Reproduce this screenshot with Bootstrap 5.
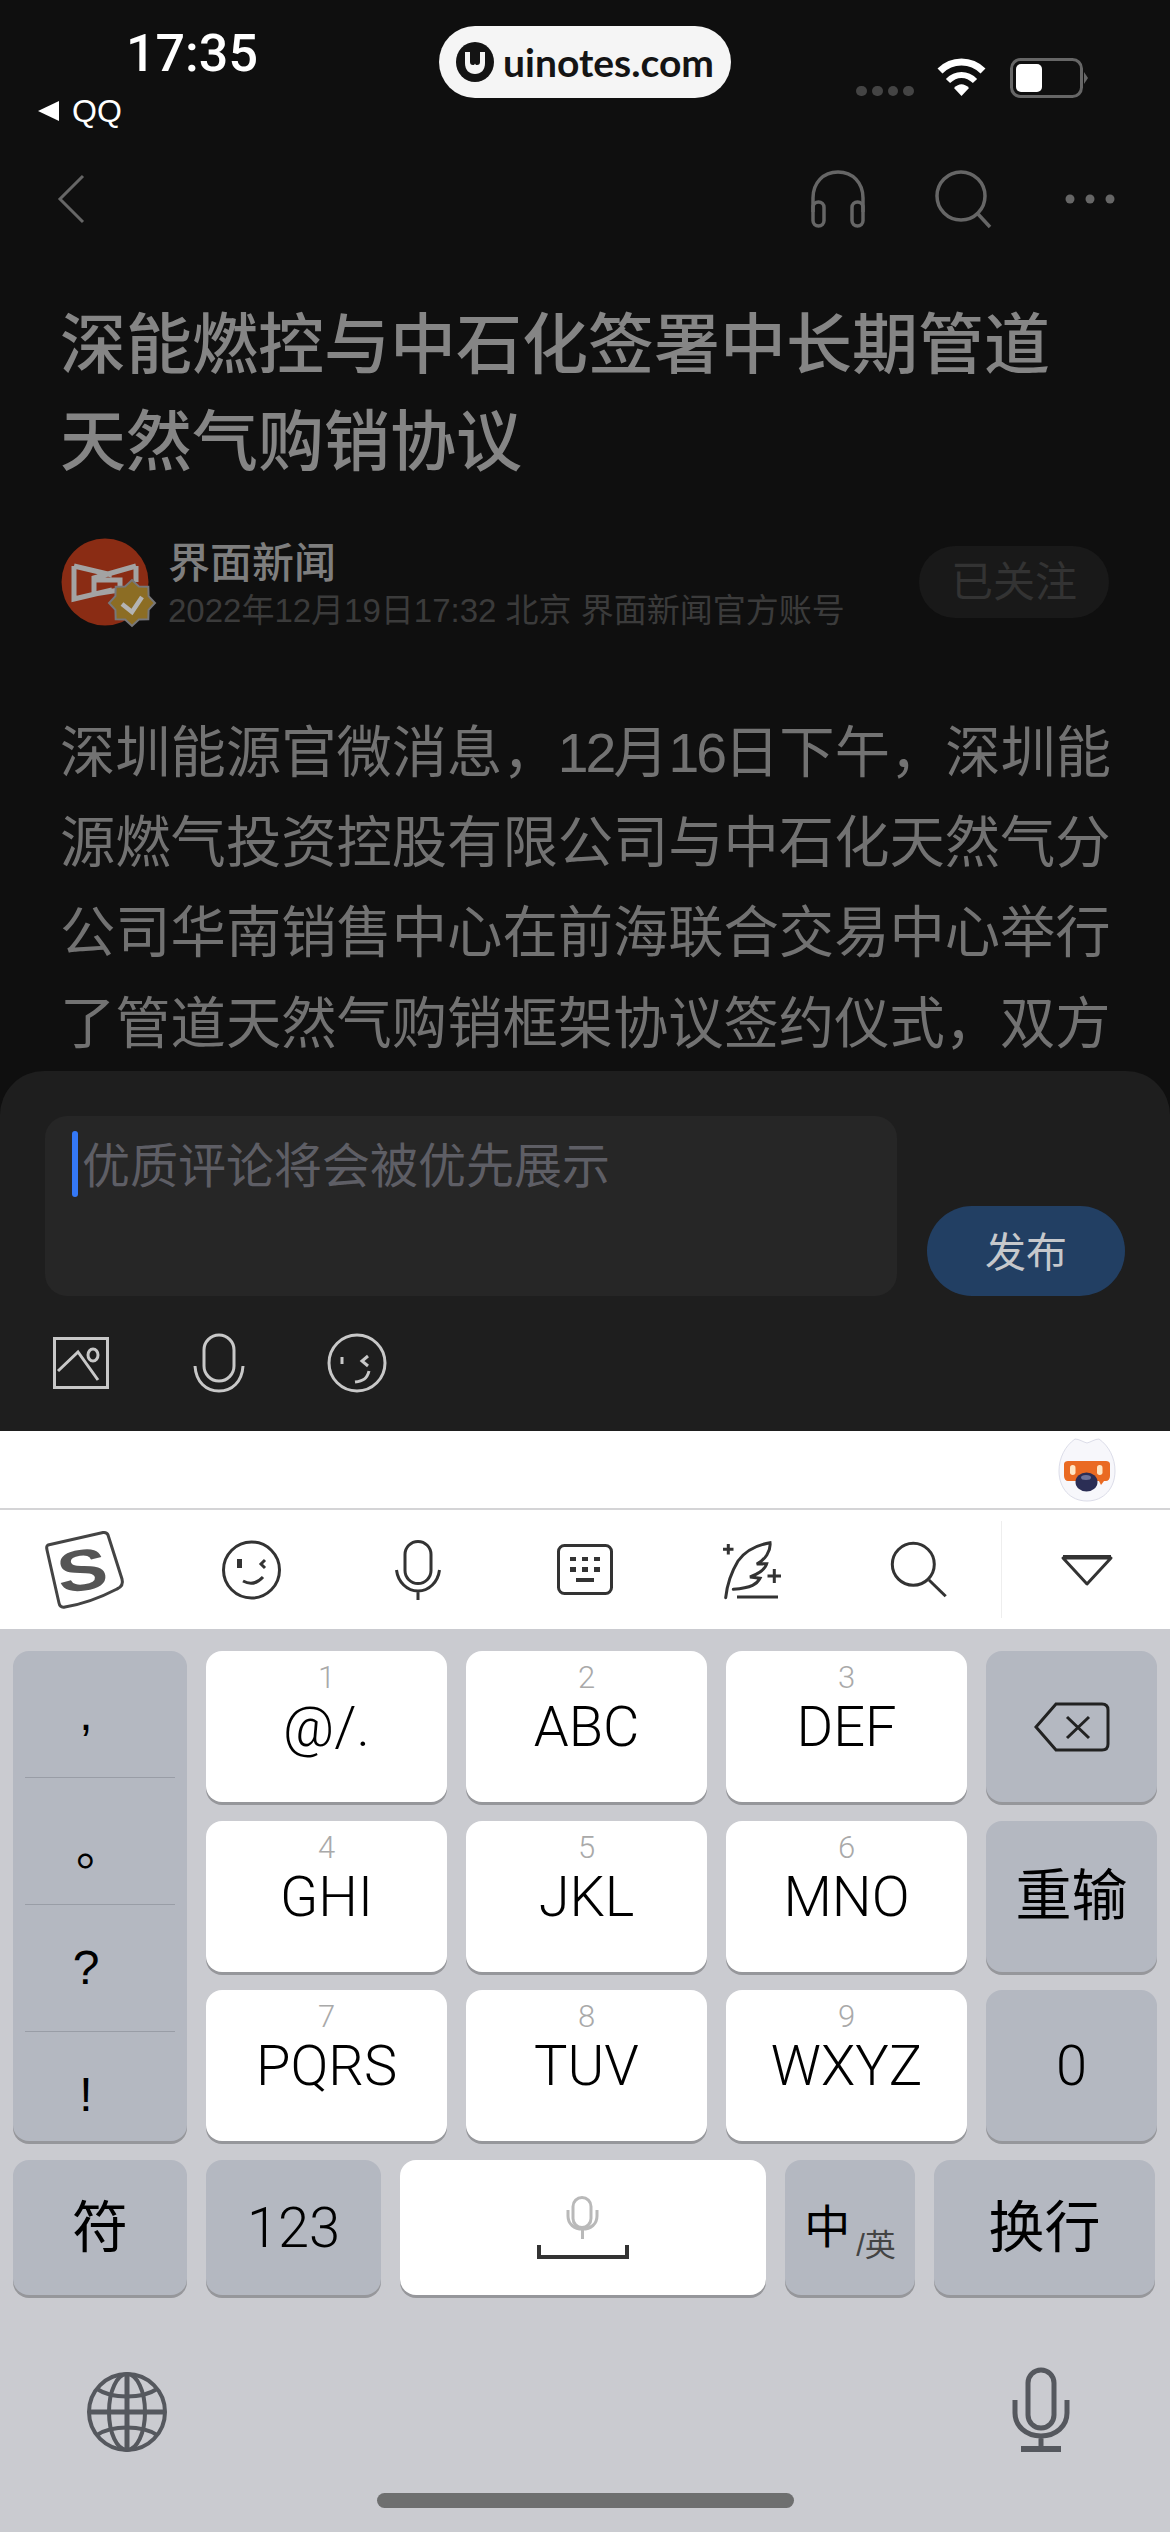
<!DOCTYPE html>
<html lang="zh-CN">
<head>
<meta charset="UTF-8">
<meta name="viewport" content="width=device-width, initial-scale=1">
<title>界面新闻</title>
<link href="https://cdn.jsdelivr.net/npm/bootstrap@5.3.3/dist/css/bootstrap.min.css" rel="stylesheet">
<style>
html, body { margin: 0; background: #0f0f0f; }
body { font-family: "Liberation Sans", "Noto Sans CJK SC", sans-serif; }
.phone { width: 1170px; height: 2532px; overflow: hidden; }
svg { display: block; flex: none; overflow: visible; }

/* dimmed article */
.article { height: 1071px; overflow: hidden; background: #0f0f0f; }
.statusbar { height: 152px; padding: 25px 82px 0 38px; }
.clock-col { width: 300px; }
.clock { color: #fff; font-family: Roboto, "Liberation Sans", sans-serif; font-size: 52px; font-weight: 500; line-height: 58px; margin-left: 88px; }
.back-app { color: #fff; font-size: 32px; line-height: 36px; margin-top: 10px; gap: 13px; }
.site-pill { margin: 1px 0 0 101px; width: 292px; height: 72px; border-radius: 36px; background: #f5f5f5; color: #141414; font-family: Lato, "Liberation Sans", sans-serif; font-size: 39px; font-weight: 700; padding-left: 17px; gap: 9px; }
.site-logo { width: 38px; height: 40px; }
.status-icons { margin-left: auto; margin-top: 33px; }
.dots4 { width: 58px; gap: 5px; margin-top: 28px; margin-right: 23px; }
.dots4 i { width: 11px; height: 10px; border-radius: 5px; background: #444; display: block; }
.wifi-gap { margin-right: 24px; }
.topnav { height: 94px; padding: 0 56px 0 57px; }
.nav-phones { margin-left: 725px; }
.nav-search { margin-left: 69px; }
.nav-more { margin-left: 72px; }
.art-title { color: #858585; font-size: 66px; font-weight: 500; line-height: 97px; margin: 51px 0 0 60px; white-space: nowrap; }
.byline { margin: 47px 61px 0 62px; height: 90px; }
.avatar-wrap { width: 88px; height: 90px; margin-right: 18px; }
.author-name { color: #7e7e7e; font-size: 42px; font-weight: 500; line-height: 46px; margin-top: 3px; }
.author-meta { color: #3b3b3b; font-size: 33px; line-height: 38px; margin-top: 5px; white-space: nowrap; }
.follow-btn { width: 190px; height: 72px; border-radius: 36px; background: #191919; color: #333; font-size: 42px; margin-left: auto; margin-top: 8px; }
.art-body { color: #727272; font-size: 55.3px; line-height: 90.2px; margin: 80px 0 0 60px; white-space: nowrap; }
.tight-num { letter-spacing: -3px; }

/* comment sheet */
.sheet { height: 360px; background: #1e1e1e; border-radius: 44px 44px 0 0; padding: 45px 45px 0; }
.comment-box { width: 852px; height: 180px; background: #262626; border-radius: 22px; padding: 15px 0 0 27px; }
.caret-bar { width: 6px; height: 66px; border-radius: 3px; background: #3478f6; margin-right: 4px; }
.placeholder-txt { color: #5e5e65; font-size: 48px; line-height: 66px; margin-top: 3px; white-space: nowrap; }
.publish-btn { width: 198px; height: 90px; margin: 90px 0 0 30px; padding-top: 5px; background: #223f63; border-radius: 45px; color: #c6c8cc; font-size: 41px; }
.sheet-tools { margin: 37px 0 0 8px; height: 60px; }
.tool-gap1 { margin-left: 84px; }
.tool-gap2 { margin-left: 82px; }

/* input method */
.cand-bar { height: 79px; background: #fff; border-bottom: 2px solid #d4d4d6; padding-right: 54px; }
.ime-tools { height: 119px; background: #fff; }
.it-sogou { margin-left: 45px; }
.it-emoji { margin-left: 99px; }
.it-mic { margin-left: 113px; }
.it-keys { margin-left: 116px; }
.it-pen { margin-left: 110px; }
.it-search { margin-left: 110px; }
.ime-split { border-left: 1px solid #eee; height: 97px; margin-left: 54px; padding-left: 59px; }

.keyboard { height: 903px; background: #cacbd0; padding: 22px 13px 0; }
.key-grid { display: grid; grid-template-columns: 174px 241px 241px 241px 171px; grid-template-rows: repeat(3, 151px); column-gap: 19px; row-gap: 18.5px; }
.kb-key { border-radius: 16px; background: #fff; box-shadow: 0 3px 0 #96979b; color: #000; }
.kb-grey { background: #b4b8c1; }
.kb-num { color: #a9a9a9; font-family: Roboto, "Liberation Sans", sans-serif; font-size: 31px; line-height: 32px; margin-top: 11px; font-weight: 300; }
.kb-letters { font-family: Roboto, "Liberation Sans", sans-serif; font-weight: 300; font-size: 56px; line-height: 62px; margin-top: 2px; white-space: nowrap; }
.kb-zh { font-size: 56px; }
.kb-digit { font-family: Roboto, "Liberation Sans", sans-serif; font-weight: 300; font-size: 56px; }
.punct-col { grid-row: 1 / span 3; display: flex; flex-direction: column; padding: 0 12px; }
.punct-item { flex: none; height: 127px; font-size: 48px; border-bottom: 1px solid #999da6; line-height: 1; }
.punct-item:last-child { flex: 1; border-bottom: 0; }
.punct-left { padding-right: 28px; }
.punct-low { padding-top: 16px; }
.key-row4 { margin-top: 19px; gap: 19px; height: 135px; }
.w-sym { width: 174px; }
.w-123 { width: 175px; }
.w-space { width: 366px; }
.w-lang { width: 130px; }
.w-ret { width: 221px; }
.lang-main { font-size: 46px; }
.lang-sub { color: #444; font-size: 31px; margin: 38px 0 0 6px; }
.kb-bottom { padding: 72px 87px 0 74px; }
.home-line { width: 417px; height: 15px; border-radius: 8px; background: #6e6f6f; margin: 41px 0 0 364px; }
</style>
</head>
<body>
<div class="phone d-flex flex-column">

  <div class="article">
    <div class="statusbar d-flex">
      <div class="clock-col">
        <div class="clock">17:35</div>
        <div class="back-app d-flex align-items-center">
          <svg width="21" height="20" viewBox="0 0 21 20"><path d="M21 0V20L0 10Z" fill="#fff"/></svg>
          <span>QQ</span>
        </div>
      </div>
      <div class="site-pill d-flex align-items-center">
        <svg class="site-logo" viewBox="0 0 38 40"><ellipse cx="19" cy="20" rx="19" ry="20" fill="#141414"/><path d="M9 10H29V21C29 28 25 32 19 32S9 28 9 21Z" fill="#f5f5f5"/><path d="M14 9H24V20C24 22 23 23 21 23 20 23 19.500 22.500 19 21.500 18.500 22.500 18 23 17 23 15 23 14 22 14 20Z" fill="#141414"/><path d="M17.500 10H20.500V21H17.500Z" fill="#141414"/></svg>
        <span>uinotes.com</span>
      </div>
      <div class="status-icons d-flex align-items-start">
        <div class="dots4 d-flex"><i></i><i></i><i></i><i></i></div>
        <svg class="wifi-gap" width="49" height="38" viewBox="0 0 49 38"><path d="M3 13C15 1 34 1 46 13" fill="none" stroke="#fff" stroke-width="7"/><path d="M11 23C19 15 30 15 38 23" fill="none" stroke="#fff" stroke-width="6"/><path d="M17 30C22 25 27 25 32 30L24.500 38Z" fill="#fff"/></svg>
        <svg width="78" height="40" viewBox="0 0 78 40"><rect x="1.500" y="1.500" width="70" height="37" rx="9" fill="none" stroke="#666" stroke-width="3"/><rect x="6" y="6" width="26" height="28" rx="5" fill="#fff"/><path d="M74 14L78 20 74 26Z" fill="#666"/></svg>
      </div>
    </div>

    <div class="topnav d-flex align-items-center">
      <svg width="28" height="50" viewBox="0 0 28 50"><path d="M26 2L3 25 26 48" fill="none" stroke="#666" stroke-width="3"/></svg>
      <svg class="nav-phones" width="56" height="58" viewBox="0 0 56 58"><path d="M3 42V28C3 13 13 2 28 2S53 13 53 28V42" fill="none" stroke="#666" stroke-width="3.500"/><rect x="3" y="32" width="11" height="24" rx="5.500" fill="none" stroke="#666" stroke-width="3.500"/><rect x="42" y="32" width="11" height="24" rx="5.500" fill="none" stroke="#666" stroke-width="3.500"/></svg>
      <svg class="nav-search" width="58" height="58" viewBox="0 0 58 58"><circle cx="26" cy="26" r="24" fill="none" stroke="#666" stroke-width="3.500"/><path d="M43 44L55 57" stroke="#666" stroke-width="3.500"/></svg>
      <svg class="nav-more" width="50" height="10" viewBox="0 0 50 10"><circle cx="5" cy="5" r="4.500" fill="#666"/><circle cx="25" cy="5" r="4.500" fill="#666"/><circle cx="45" cy="5" r="4.500" fill="#666"/></svg>
    </div>

    <div class="art-title">深能燃控与中石化签署中长期管道<br>天然气购销协议</div>

    <div class="byline d-flex">
      <div class="avatar-wrap">
        <svg width="94" height="90" viewBox="0 0 94 90">
          <circle cx="43" cy="44" r="43.500" fill="#8a2c14"/>
          <path d="M12 28L50 37M12 28V61L50 52M74 28L32 40V56L70 50M74 28V44M32 42H58V52" fill="none" stroke="#a3a3a3" stroke-width="5"/>
          <path d="M70 42L76.900 48.400 86.300 48.700 86.600 58.100 93 65 86.600 71.900 86.300 81.300 76.900 81.600 70 88 63.100 81.600 53.700 81.300 53.400 71.900 47 65 53.400 58.100 53.700 48.700 63.100 48.400Z" fill="#8c6d24" stroke="#77777a" stroke-width="2"/>
          <path d="M60 66L70 74 80 59" fill="none" stroke="#b4b4b4" stroke-width="4.500"/>
        </svg>
      </div>
      <div>
        <div class="author-name">界面新闻</div>
        <div class="author-meta">2022年12月19日17:32 北京 界面新闻官方账号</div>
      </div>
      <div class="follow-btn d-flex align-items-center justify-content-center">已关注</div>
    </div>

    <div class="art-body">深圳能源官微消息，<span class="tight-num">12</span>月<span class="tight-num">16</span>日下午，深圳能<br>源燃气投资控股有限公司与中石化天然气分<br>公司华南销售中心在前海联合交易中心举行<br>了管道天然气购销框架协议签约仪式，双方</div>
  </div>

  <div class="sheet">
    <div class="d-flex">
      <div class="comment-box d-flex align-items-start">
        <span class="caret-bar"></span>
        <span class="placeholder-txt">优质评论将会被优先展示</span>
      </div>
      <div class="publish-btn d-flex align-items-center justify-content-center">发布</div>
    </div>
    <div class="sheet-tools d-flex align-items-center">
      <svg width="56" height="52" viewBox="0 0 56 52"><rect x="1.500" y="1.500" width="53" height="49" fill="none" stroke="#c8c8c8" stroke-width="3"/><path d="M5 34L25 15 45 43" fill="none" stroke="#c8c8c8" stroke-width="3"/><ellipse cx="40" cy="18" rx="5" ry="6" fill="none" stroke="#c8c8c8" stroke-width="3"/></svg>
      <svg class="tool-gap1" width="52" height="60" viewBox="0 0 52 60"><rect x="11" y="2" width="30" height="46" rx="15" fill="none" stroke="#c8c8c8" stroke-width="3"/><path d="M2 33C3 49 13 58 26 58S49 49 50 33" fill="none" stroke="#c8c8c8" stroke-width="3"/></svg>
      <svg class="tool-gap2" width="60" height="60" viewBox="0 0 60 60"><circle cx="30" cy="30" r="28" fill="none" stroke="#c8c8c8" stroke-width="3"/><path d="M15 24V31M41 23L35 28 41 33M42 38C40 46 36 48 28 49" fill="none" stroke="#c8c8c8" stroke-width="3"/></svg>
    </div>
  </div>

  <div class="cand-bar d-flex justify-content-end align-items-center">
    <svg width="58" height="64" viewBox="0 0 58 64">
      <path d="M29 5C25 4 21 1 17 1 7 8 1 20 1 33 1 50 12 63 29 63S57 50 57 33C57 20 51 8 41 1 37 1 33 4 29 5Z" fill="#f7f7fb" stroke="#dcdde9"/>
      <path d="M6 26C6 24 8 23 10 23H48C50 23 52 24 52 26V38C52 41 50 43 48 43H46L43 47 41 43H10C8 43 6 41 6 38Z" fill="#ea6a22"/>
      <rect x="12" y="27" width="5.500" height="10" rx="2.700" fill="#ffe6c4"/>
      <rect x="39" y="27" width="5.500" height="10" rx="2.700" fill="#ffe6c4"/>
      <ellipse cx="28.500" cy="44" rx="11" ry="9.500" fill="#2b2e55"/>
      <ellipse cx="28" cy="39.500" rx="5" ry="2.500" fill="#6d7298"/>
    </svg>
  </div>

  <div class="ime-tools d-flex align-items-center">
    <svg class="it-sogou" width="78" height="78" viewBox="0 0 78 78"><path d="M3 14L58 1.500Q62 1 63 4L77 48Q79 55 72 58 45 72 20 76 15 77 14 72L2 19Q1 15 3 14Z" fill="#fff" stroke="#444" stroke-width="3"/><text transform="translate(40 59) rotate(-8) scale(1.300 1)" text-anchor="middle" font-family="Liberation Sans" font-size="58" font-weight="700" fill="#555">S</text></svg>
    <svg class="it-emoji" width="60" height="60" viewBox="0 0 60 60"><circle cx="29.500" cy="30" r="28" fill="none" stroke="#333" stroke-width="3"/><path d="M15 19H20V28H15Z" fill="#333"/><path d="M43 20L39 24 43 28M21 41Q32 47 41 37" fill="none" stroke="#333" stroke-width="3"/></svg>
    <svg class="it-mic" width="46" height="60" viewBox="0 0 46 60"><rect x="10" y="1.500" width="26" height="42" rx="13" fill="none" stroke="#333" stroke-width="3"/><path d="M1.500 30C3 42 12 51 23 51S43 42 44.500 30M23 51V60" fill="none" stroke="#333" stroke-width="3"/></svg>
    <svg class="it-keys" width="56" height="51" viewBox="0 0 56 51"><rect x="1.500" y="1.500" width="53" height="48" rx="6" fill="none" stroke="#333" stroke-width="3"/><path d="M13 13h6v4h-6zM25 13h6v4h-6zM37 13h6v4h-6zM13 23h6v5h-6zM25 23h6v5h-6zM37 23h6v5h-6zM19 34h18v4H19z" fill="#333"/></svg>
    <svg class="it-pen" width="58" height="58" viewBox="0 0 58 58"><path d="M2.700 56.700C4 44 9 30 15 20 22 10 34 4 47 1.700 48 10 42 19 33.700 23L43.700 22.700C42 29 35 33 27 36L37 37.300C34 43 29 47 10.300 48.300" fill="none" stroke="#333" stroke-width="3" stroke-linecap="round"/><path d="M14 56H55" stroke="#333" stroke-width="3"/><path d="M5.300 3V13.500M0 8.300H10.500M51.300 28V42M44.500 35H58" stroke="#333" stroke-width="3"/></svg>
    <svg class="it-search" width="56" height="56" viewBox="0 0 56 56"><circle cx="22.300" cy="22.300" r="21" fill="none" stroke="#333" stroke-width="3"/><path d="M38 38L54.700 54.300" stroke="#333" stroke-width="3"/></svg>
    <div class="ime-split d-flex align-items-center">
      <svg width="52" height="32" viewBox="0 0 52 32"><path d="M2 4H50L26 30Z" fill="none" stroke="#333" stroke-width="3" stroke-linejoin="round"/><path d="M2 3H50" stroke="#333" stroke-width="4"/></svg>
    </div>
  </div>

  <div class="keyboard">
    <div class="key-grid">
      <div class="kb-key kb-grey punct-col text-center">
        <div class="punct-item punct-left d-flex align-items-center justify-content-center">,</div>
        <div class="punct-item punct-low d-flex align-items-center justify-content-center">。</div>
        <div class="punct-item punct-left d-flex align-items-center justify-content-center">?</div>
        <div class="punct-item punct-left punct-low d-flex align-items-center justify-content-center">!</div>
      </div>
      <div class="kb-key text-center"><div class="kb-num">1</div><div class="kb-letters">@/.</div></div>
      <div class="kb-key text-center"><div class="kb-num">2</div><div class="kb-letters">ABC</div></div>
      <div class="kb-key text-center"><div class="kb-num">3</div><div class="kb-letters">DEF</div></div>
      <div class="kb-key kb-grey d-flex align-items-center justify-content-center">
        <svg width="76" height="50" viewBox="0 0 76 50"><path d="M22 2H68C72 2 74 4 74 8V42C74 46 72 48 68 48H22L2 25Z" fill="none" stroke="#222" stroke-width="3"/><path d="M33 15L55 36M55 15L33 36" stroke="#222" stroke-width="3"/></svg>
      </div>
      <div class="kb-key text-center"><div class="kb-num">4</div><div class="kb-letters">GHI</div></div>
      <div class="kb-key text-center"><div class="kb-num">5</div><div class="kb-letters">JKL</div></div>
      <div class="kb-key text-center"><div class="kb-num">6</div><div class="kb-letters">MNO</div></div>
      <div class="kb-key kb-grey kb-zh d-flex align-items-center justify-content-center">重输</div>
      <div class="kb-key text-center"><div class="kb-num">7</div><div class="kb-letters">PQRS</div></div>
      <div class="kb-key text-center"><div class="kb-num">8</div><div class="kb-letters">TUV</div></div>
      <div class="kb-key text-center"><div class="kb-num">9</div><div class="kb-letters">WXYZ</div></div>
      <div class="kb-key kb-grey kb-digit d-flex align-items-center justify-content-center">0</div>
    </div>
    <div class="key-row4 d-flex">
      <div class="kb-key kb-grey kb-zh w-sym d-flex align-items-center justify-content-center">符</div>
      <div class="kb-key kb-grey kb-digit w-123 d-flex align-items-center justify-content-center">123</div>
      <div class="kb-key w-space d-flex align-items-center justify-content-center">
        <svg width="92" height="64" viewBox="0 0 92 64"><rect x="36" y="1.500" width="18" height="30" rx="9" fill="none" stroke="#b9b9b9" stroke-width="3"/><path d="M31 14V20C31 28 37 33 45.500 33S60 28 60 20V14M45.500 33V43" fill="none" stroke="#b9b9b9" stroke-width="3"/><path d="M2 49V61H90V49" fill="none" stroke="#333" stroke-width="4"/></svg>
      </div>
      <div class="kb-key kb-grey w-lang d-flex align-items-center justify-content-center"><span class="lang-main">中</span><span class="lang-sub">/英</span></div>
      <div class="kb-key kb-grey kb-zh w-ret d-flex align-items-center justify-content-center">换行</div>
    </div>
    <div class="kb-bottom d-flex justify-content-between align-items-end">
      <svg width="80" height="80" viewBox="0 0 80 80"><g fill="none" stroke="#55585e" stroke-width="4"><circle cx="40" cy="40" r="38"/><ellipse cx="40" cy="40" rx="18" ry="38"/><path d="M40 2V78M2 40H78" stroke-width="5"/><path d="M10 17C25 27 55 27 70 17M10 63C25 53 55 53 70 63"/></g></svg>
      <svg width="58" height="85" viewBox="0 0 58 85"><rect x="16" y="3" width="26" height="58" rx="13" fill="none" stroke="#55585e" stroke-width="5"/><path d="M3 33V46C3 59 14 69 29 69S55 59 55 46V33M29 69V80" fill="none" stroke="#55585e" stroke-width="5"/><rect x="9" y="79" width="40" height="6" fill="#55585e"/></svg>
    </div>
    <div class="home-line"></div>
  </div>

</div>
</body>
</html>
